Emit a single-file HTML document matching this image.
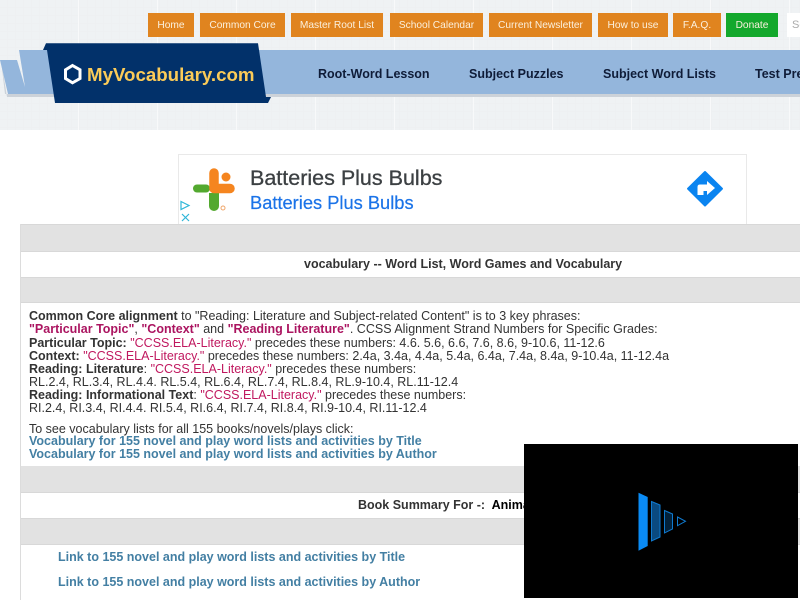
<!DOCTYPE html>
<html><head><meta charset="utf-8"><style>
html,body{margin:0;padding:0;width:800px;height:600px;overflow:hidden;background:#fff}
body{position:relative;font-family:"Liberation Sans",sans-serif;font-size:12.5px;color:#333}
div,a,svg{position:absolute}
.bt{top:13px;height:24px;line-height:25px;background:#e0841f;color:#fbf0dd;font-size:10.2px;text-align:center;border:0}
.nav{top:67px;font-size:12.5px;line-height:14px;font-weight:bold;color:#0f1c38;white-space:nowrap}
.g{left:21px;width:779px;background:#e2e2e2;border-bottom:1px solid #d8d8d8;box-sizing:border-box}
.l{left:29px;white-space:nowrap;line-height:13px;height:13px}
.l b{color:#333}.l i{font-style:normal;color:#c0185f}.l b.p{color:#ab1460}
.k{font-weight:bold;color:#437fa3;white-space:nowrap;line-height:13px}
</style></head><body>
<svg style="left:0;top:0" width="800" height="130">
<defs>
<pattern id="m" width="8" height="8" patternUnits="userSpaceOnUse"><path d="M8 0V8M0 8H8" stroke="#e8ecee" stroke-width="1" fill="none"/></pattern>
<pattern id="M" width="79" height="79" patternUnits="userSpaceOnUse"><path d="M78.500 0V79" stroke="#f8f9fa" stroke-width="1" fill="none"/></pattern>
</defs>
<rect width="800" height="130" fill="#eff2f4"/>
<rect width="800" height="130" fill="url(#m)" opacity=".5"/>
<rect width="800" height="130" fill="url(#M)"/>
<path d="M1 60L7 97H55V94H800V97H60V94H5Z" fill="#ccd2d9"/>
<path d="M0 60H17L25 87L19 50H50L54 94H8Z" fill="#94b6dc"/>
<rect x="255" y="50" width="545" height="44" fill="#94b6dc"/>
<path d="M46 43.300H258L266 97H271L268 103H55L47 50H43Z" fill="#02316a"/>
<path d="M72.500 65.500L80 69.800V78.500L72.500 82.800L65.500 78.500V69.800Z" fill="none" stroke="#fff" stroke-width="3"/>
<text x="87" y="81" font-family="Liberation Sans" font-size="18.700" font-weight="bold" fill="#fbcb58">MyVocabulary.com</text>
</svg>
<div class="bt" style="left:148px;width:46px">Home</div>
<div class="bt" style="left:200px;width:85px">Common Core</div>
<div class="bt" style="left:291px;width:92px">Master Root List</div>
<div class="bt" style="left:390px;width:93px">School Calendar</div>
<div class="bt" style="left:489px;width:103px">Current Newsletter</div>
<div class="bt" style="left:598px;width:70px">How to use</div>
<div class="bt" style="left:673px;width:48px">F.A.Q.</div>
<div class="bt" style="left:726px;width:52px;background:#13a82c">Donate</div>
<div style="left:787px;top:13px;width:13px;height:24px;background:#fff;color:#aaa;font-size:11px;line-height:24px;padding-left:5px;box-sizing:border-box;overflow:hidden;white-space:nowrap">Search</div>
<div class="nav" style="left:318px">Root-Word Lesson</div>
<div class="nav" style="left:469px">Subject Puzzles</div>
<div class="nav" style="left:603px">Subject Word Lists</div>
<div class="nav" style="left:755px">Test Prep</div>

<div style="left:178px;top:154px;width:569px;height:70px;border:1px solid #e9e9e9;border-bottom:0;box-sizing:border-box"></div>
<svg style="left:190px;top:165px" width="50" height="50">
<path d="M7 23.500H16" stroke="#53a92f" stroke-width="8" stroke-linecap="round"/>
<path d="M19 28H29V41A5 5 0 0 1 19 41Z" fill="#53a92f"/>
<path d="M24 8V23.500H40" stroke="#f5851f" stroke-width="9.500" stroke-linecap="round" stroke-linejoin="round" fill="none"/>
<circle cx="36" cy="12" r="4.500" fill="#f5851f"/>
<circle cx="33" cy="43" r="2" fill="none" stroke="#f0a66a" stroke-width="1"/>
</svg>
<div style="left:250px;top:165px;font-size:21.500px;line-height:27px;color:#3c4043;white-space:nowrap;-webkit-text-stroke:.3px #3c4043">Batteries Plus Bulbs</div>
<div style="left:250px;top:191px;font-size:18.300px;line-height:24px;color:#1a73e8;white-space:nowrap;-webkit-text-stroke:.2px #1a73e8">Batteries Plus Bulbs</div>
<svg style="left:179px;top:199px" width="14" height="25">
<path d="M2 2.500L10 6.500L2 10.500Z" fill="none" stroke="#2fb6d8" stroke-width="1.200"/>
<path d="M3 15L10 22M10 15L3 22" stroke="#2fb6d8" stroke-width="1.200"/>
</svg>
<svg style="left:686px;top:170px" width="38" height="38">
<path d="M19 2L36 18.700L19 35.500L2 18.700Z" fill="#0a84f0" stroke="#0a84f0" stroke-width="2" stroke-linejoin="round"/>
<path d="M11.500 25V17Q11.500 14.500 14 14.500H21V11L29 18L21 25V21H17.500V25Z" fill="#fff"/>
</svg>

<div style="left:20px;top:224px;width:1px;height:376px;background:#dcdcdc"></div>
<div class="g" style="top:224px;height:28px;border-top:1px solid #d8d8d8"></div>
<div class="g" style="top:277px;height:26px;border-top:1px solid #d8d8d8"></div>
<div class="g" style="top:466px;height:27px"></div>
<div class="g" style="top:518px;height:27px;border-top:1px solid #d8d8d8"></div>

<div style="left:304px;top:257px;font-weight:bold;line-height:14px;white-space:nowrap;color:#333">vocabulary -- Word List, Word Games and Vocabulary</div>
<div class="l" style="top:310px"><b>Common Core alignment</b> to "Reading: Literature and Subject-related Content" is to 3 key phrases:</div>
<div class="l" style="top:323px"><b class="p">"Particular Topic"</b>, <b class="p">"Context"</b> and <b class="p">"Reading Literature"</b>. CCSS Alignment Strand Numbers for Specific Grades:</div>
<div class="l" style="top:337px"><b>Particular Topic:</b> <i>"CCSS.ELA-Literacy."</i> precedes these numbers: 4.6. 5.6, 6.6, 7.6, 8.6, 9-10.6, 11-12.6</div>
<div class="l" style="top:350px"><b>Context:</b> <i>"CCSS.ELA-Literacy."</i> precedes these numbers: 2.4a, 3.4a, 4.4a, 5.4a, 6.4a, 7.4a, 8.4a, 9-10.4a, 11-12.4a</div>
<div class="l" style="top:363px"><b>Reading: Literature</b>: <i>"CCSS.ELA-Literacy."</i> precedes these numbers:</div>
<div class="l" style="top:376px">RL.2.4, RL.3.4, RL.4.4. RL.5.4, RL.6.4, RL.7.4, RL.8.4, RL.9-10.4, RL.11-12.4</div>
<div class="l" style="top:389px"><b>Reading: Informational Text</b>: <i>"CCSS.ELA-Literacy."</i> precedes these numbers:</div>
<div class="l" style="top:402px">RI.2.4, RI.3.4, RI.4.4. RI.5.4, RI.6.4, RI.7.4, RI.8.4, RI.9-10.4, RI.11-12.4</div>
<div class="l" style="top:423px">To see vocabulary lists for all 155 books/novels/plays click:</div>
<div class="k" style="left:29px;top:435px">Vocabulary for 155 novel and play word lists and activities by Title</div>
<div class="k" style="left:29px;top:448px">Vocabulary for 155 novel and play word lists and activities by Author</div>
<div style="left:358px;top:498px;font-weight:bold;line-height:14px;white-space:pre;color:#333">Book Summary For -:  <span style="color:#000">Animal Farm</span></div>
<div class="k" style="left:58px;top:551px">Link to 155 novel and play word lists and activities by Title</div>
<div class="k" style="left:58px;top:576px">Link to 155 novel and play word lists and activities by Author</div>

<div style="left:524px;top:444px;width:274px;height:154px;background:#000"></div>
<svg style="left:600px;top:470px" width="120" height="100">
<path d="M38.500 22.700L47.700 27V76L38.500 80.700Z" fill="#0a8bf5"/>
<path d="M51.500 31.500L60 35V67L51.500 71Z" fill="#0a4a80" stroke="#0f7ad0" stroke-width="1"/>
<path d="M64.500 40.500L72.500 44V59L64.500 63Z" fill="#03223c" stroke="#0f7ad0" stroke-width="1"/>
<path d="M77.500 47L85.500 51.300L77.500 55.700Z" fill="#000" stroke="#0f7ad0" stroke-width="1"/>
</svg>
</body></html>
